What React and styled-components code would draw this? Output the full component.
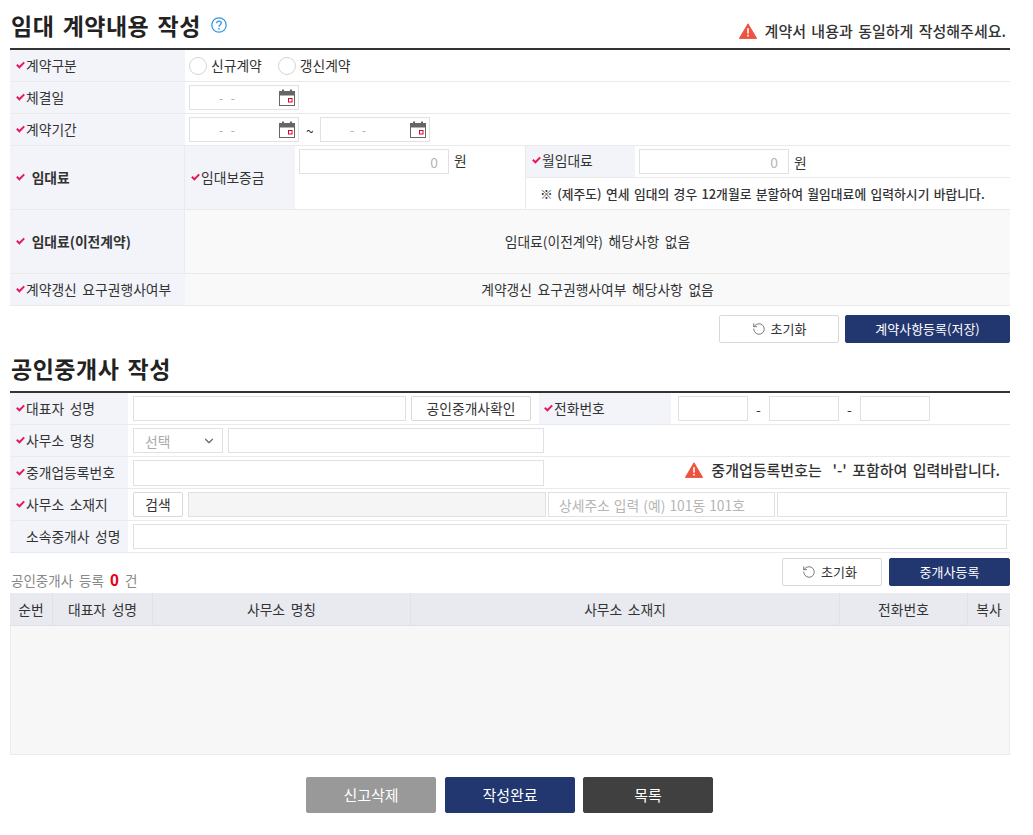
import React from "react";
import styled, { createGlobalStyle } from "styled-components";
import { RotateCcw, ChevronDown } from "lucide-react";

const GlobalStyle = createGlobalStyle`
  * { box-sizing: border-box; }
  body {
    margin: 0;
    background: #fff;
    color: #333;
    font-family: "Noto Sans CJK KR", "Noto Sans", sans-serif;
    font-size: 13.8px;
  }
`;

const Page = styled.div`
  width: 1000px;
  margin-left: 10px;
  padding-bottom: 22px;
`;

const SectionHead = styled.div`
  height: 50px;
  border-bottom: 2px solid #333;
  display: flex;
  align-items: flex-end;
  justify-content: space-between;
`;

const Title = styled.h2`
  margin: 0 0 7px 1px;
  font-size: 23px;
  line-height: 32px;
  font-weight: 700;
  color: #222;
  word-spacing: 2.6px;
  letter-spacing: 0.5px;
  display: flex;
  align-items: center;
  gap: 10px;
`;

const Notice = styled.div`
  margin: 0 ${(p) => p.$right || 4}px ${(p) => p.$bottom || 7}px 0;
  display: flex;
  align-items: center;
  gap: 8px;
  font-weight: 500;
  font-size: 15px;
  line-height: 20px;
  color: #333;
  word-spacing: 2px;
`;

const Row = styled.div`
  display: flex;
  height: ${(p) => p.$h || 32}px;
  border-bottom: 1px solid #eaeaea;
  background: ${(p) => p.$bg || "#fff"};
`;

const Th = styled.div`
  width: ${(p) => p.$w}px;
  flex: none;
  background: #f2f4f9;
  display: flex;
  align-items: center;
  gap: 1px;
  padding-left: ${(p) => p.$pl || 6}px;
  padding-bottom: ${(p) => p.$pb ?? 2}px;
  font-weight: ${(p) => (p.$bold ? 700 : 400)};
  white-space: nowrap;
  word-spacing: 2.5px;
  border-right: ${(p) => (p.$divide ? "1px solid #e8eaf0" : "0")};
`;

const Td = styled.div`
  flex: ${(p) => (p.$w ? "none" : 1)};
  width: ${(p) => (p.$w ? `${p.$w}px` : "auto")};
  display: flex;
  align-items: ${(p) => (p.$top ? "flex-start" : "center")};
  gap: ${(p) => p.$gap ?? 5}px;
  padding-left: ${(p) => p.$pl ?? 5}px;
  padding-top: ${(p) => (p.$top ? 3 : 0)}px;
  white-space: nowrap;
`;

const PlainCell = styled.div`
  flex: 1;
  display: flex;
  align-items: center;
  justify-content: center;
  padding-bottom: 2px;
  word-spacing: 2.5px;
  white-space: nowrap;
`;

const Radio = styled.label`
  display: flex;
  align-items: center;
  gap: 4px;
  margin-right: 16px;
`;

const RadioMark = styled.span`
  width: 18px;
  height: 18px;
  border: 1px solid #d5d5d5;
  border-radius: 50%;
  background: #fff;
`;

const RadioText = styled.span`
  padding-bottom: 2px;
`;

const DateBox = styled.div`
  width: 110px;
  height: 25px;
  flex: none;
  border: 1px solid #e1e1e1;
  background: #fff;
  display: flex;
  align-items: center;
  justify-content: space-between;
  padding: 0 2px 0 29px;
  color: #aaa;
  font-size: 12px;
  word-spacing: 5px;
`;

const Input = styled.input`
  width: ${(p) => p.$w}px;
  height: ${(p) => p.$h || 25}px;
  flex: none;
  border: 1px solid #e1e1e1;
  border-radius: 0;
  outline: 0;
  padding: 0 10px;
  font: inherit;
  word-spacing: 1px;
  color: #aaa;
  text-align: ${(p) => p.$align || "left"};
  background: ${(p) => (p.$disabled ? "#f5f5f5" : "#fff")};

  &::placeholder {
    color: #b5b5b5;
    opacity: 1;
  }
`;

const Won = styled.span`
  line-height: 22px;
`;

const Sep = styled.span`
  width: ${(p) => p.$w}px;
  flex: none;
`;

const RentSide = styled.div`
  flex: 1;
  display: flex;
  flex-direction: column;
  border-left: 1px solid #eaeaea;
`;

const RentTop = styled.div`
  display: flex;
  height: 32px;
  border-bottom: 1px solid #eaeaea;
`;

const RentNote = styled.div`
  flex: 1;
  display: flex;
  align-items: center;
  padding: 0 0 1px 14px;
  font-weight: 500;
  font-size: 12.8px;
  word-spacing: 1.5px;
  white-space: nowrap;
`;

const ButtonRow = styled.div`
  display: flex;
  justify-content: flex-end;
  align-items: flex-end;
  gap: ${(p) => p.$gap || 6}px;
  margin-top: ${(p) => p.$mt}px;
`;

const Btn = styled.button`
  width: ${(p) => p.$w}px;
  height: ${(p) => p.$h || 28}px;
  flex: none;
  border: 1px solid ${(p) => p.$bg || "#d8d8d8"};
  border-radius: 2px;
  background: ${(p) => p.$bg || "#fff"};
  color: ${(p) => p.$color || "#333"};
  font: inherit;
  font-size: ${(p) => p.$fs || 13}px;
  padding: 0 ${(p) => p.$pr || 0}px 1px 0;
  display: inline-flex;
  align-items: center;
  justify-content: center;
  gap: 5px;
`;

const SearchBtn = styled(Btn)`
  margin-right: 3px;
`;

const Select = styled.div`
  width: 90px;
  height: 25px;
  flex: none;
  border: 1px solid #e1e1e1;
  display: flex;
  align-items: center;
  justify-content: space-between;
  padding: 0 6px 0 11px;
  color: #aaa;
`;

const Count = styled.div`
  margin: 0 auto -4px 1px;
  color: #888;
  font-size: 13.5px;
  line-height: 18px;
  word-spacing: 3px;
`;

const CountNum = styled.b`
  color: #e60012;
  font-size: 16px;
  font-family: "Liberation Sans", sans-serif;
`;

const TableHead = styled.div`
  display: grid;
  grid-template-columns: 42px 100px 258px 429px 128px 43px;
  height: 33px;
  margin-top: 7px;
  background: #e9eaef;
  border-bottom: 1px solid #dfe1e8;
`;

const HeadCell = styled.div`
  display: flex;
  align-items: center;
  justify-content: center;
  padding-bottom: 1px;
  border-left: 1px solid #dfe1e8;
  word-spacing: 2.5px;

  &:first-child {
    border-left: 0;
  }
`;

const TableBody = styled.div`
  height: 129px;
  background: #f7f7f7;
  border: 1px solid #ececec;
  border-top: 0;
`;

const Footer = styled.div`
  display: flex;
  padding-left: 296px;
  margin-top: 22px;

  & > button:first-child {
    margin-right: 9px;
  }

  & > button:nth-child(2) {
    margin-right: 8px;
  }
`;

const CheckSvg = styled.svg`
  flex: none;
`;

const Check = () => (
  <CheckSvg width="9" height="8" viewBox="0 0 9 8">
    <path d="M0.8 3.8 L3.4 6.3 L8.2 1.4" fill="none" stroke="#e8185f" strokeWidth="2" />
  </CheckSvg>
);

const HelpIcon = () => (
  <svg width="16" height="16" viewBox="0 0 16 16">
    <circle cx="8" cy="8" r="7.2" fill="none" stroke="#2c96dc" strokeWidth="1.2" />
    <path d="M5.7 6.2 C5.8 3.4 10.3 3.5 10.3 6.1 C10.3 7.8 8 7.8 8 9.8" fill="none" stroke="#2c96dc" strokeWidth="1.3" />
    <circle cx="8" cy="11.8" r="0.9" fill="#2c96dc" />
  </svg>
);

const WarnIcon = () => (
  <svg width="18" height="16" viewBox="0 0 18 16">
    <path d="M9 0.8 L17.6 15.4 L0.4 15.4 Z" fill="#ee5340" stroke="#ee5340" strokeLinejoin="round" />
    <rect x="8.2" y="5.2" width="1.6" height="5.4" fill="#fff" />
    <rect x="8.2" y="11.8" width="1.6" height="1.7" fill="#fff" />
  </svg>
);

const CalendarIcon = () => (
  <svg width="17" height="18" viewBox="0 0 17 18">
    <rect x="0.5" y="2.5" width="15" height="14" fill="#fff" stroke="#666" />
    <rect x="0.5" y="2.5" width="15" height="4" fill="#666" />
    <rect x="3" y="0.5" width="2" height="3" fill="#666" />
    <rect x="11" y="0.5" width="2" height="3" fill="#666" />
    <rect x="9.5" y="9.5" width="3.5" height="3.5" fill="#fff" stroke="#d8002f" />
  </svg>
);

const DateInput = () => (
  <DateBox>
    <span>- -</span>
    <CalendarIcon />
  </DateBox>
);

const ResetButton = ({ w, pr }) => (
  <Btn $w={w} $pr={pr}>
    <RotateCcw size={14} strokeWidth={1.3} color="#555" />
    초기화
  </Btn>
);

function App() {
  return (
    <Page>
      <GlobalStyle />
      <SectionHead>
        <Title>
          임대 계약내용 작성
          <HelpIcon />
        </Title>
        <Notice>
          <WarnIcon />
          계약서 내용과 동일하게 작성해주세요.
        </Notice>
      </SectionHead>

      <Row>
        <Th $w={175}>
          <Check />
          계약구분
        </Th>
        <Td $pl={4} $gap={0}>
          <Radio>
            <RadioMark />
            <RadioText>신규계약</RadioText>
          </Radio>
          <Radio>
            <RadioMark />
            <RadioText>갱신계약</RadioText>
          </Radio>
        </Td>
      </Row>
      <Row>
        <Th $w={175}>
          <Check />
          체결일
        </Th>
        <Td $pl={4}>
          <DateInput />
        </Td>
      </Row>
      <Row>
        <Th $w={175}>
          <Check />
          계약기간
        </Th>
        <Td $pl={4} $gap={7}>
          <DateInput />
          <Sep $w={7}>~</Sep>
          <DateInput />
        </Td>
      </Row>
      <Row $h={64}>
        <Th $w={175} $bold $divide>
          <Check />
          &nbsp;임대료
        </Th>
        <Th $w={110}>
          <Check />
          임대보증금
        </Th>
        <Td $w={230} $top $pl={4}>
          <Input $w={150} $align="right" placeholder="0" />
          <Won>원</Won>
        </Td>
        <RentSide>
          <RentTop>
            <Th $w={109} $pb={3}>
              <Check />
              월임대료
            </Th>
            <Td $pl={4}>
              <Input $w={150} $align="right" placeholder="0" />
              <Won>원</Won>
            </Td>
          </RentTop>
          <RentNote>※ (제주도) 연세 임대의 경우 12개월로 분할하여 월임대료에 입력하시기 바랍니다.</RentNote>
        </RentSide>
      </Row>
      <Row $h={64} $bg="#f9f9fa">
        <Th $w={175} $bold $divide>
          <Check />
          &nbsp;임대료(이전계약)
        </Th>
        <PlainCell>임대료(이전계약) 해당사항 없음</PlainCell>
      </Row>
      <Row $bg="#f9f9fa">
        <Th $w={175}>
          <Check />
          계약갱신 요구권행사여부
        </Th>
        <PlainCell>계약갱신 요구권행사여부 해당사항 없음</PlainCell>
      </Row>

      <ButtonRow $mt={9}>
        <ResetButton w={120} />
        <Btn $w={165} $bg="#22376f" $color="#fff">계약사항등록(저장)</Btn>
      </ButtonRow>

      <SectionHead>
        <Title>공인중개사 작성</Title>
      </SectionHead>

      <Row>
        <Th $w={118}>
          <Check />
          대표자 성명
        </Th>
        <Td $w={411}>
          <Input $w={273} />
          <Btn $w={120} $h={25} $fs={13.8}>공인중개사확인</Btn>
        </Td>
        <Th $w={132} $pl={5}>
          <Check />
          전화번호
        </Th>
        <Td $pl={7} $gap={8}>
          <Input $w={70} />
          <Sep $w={5}>-</Sep>
          <Input $w={70} />
          <Sep $w={5}>-</Sep>
          <Input $w={70} />
        </Td>
      </Row>
      <Row>
        <Th $w={118}>
          <Check />
          사무소 명칭
        </Th>
        <Td>
          <Select>
            선택
            <ChevronDown size={14} color="#666" />
          </Select>
          <Input $w={316} />
        </Td>
      </Row>
      <Row>
        <Th $w={118}>
          <Check />
          중개업등록번호
        </Th>
        <Td>
          <Input $w={411} $h={26} />
        </Td>
        <Notice $right={10} $bottom={5}>
          <WarnIcon />
          중개업등록번호는 &nbsp;'-' 포함하여 입력바랍니다.
        </Notice>
      </Row>
      <Row>
        <Th $w={118}>
          <Check />
          사무소 소재지
        </Th>
        <Td $gap={2}>
          <SearchBtn $w={50} $h={25} $fs={13.8}>검색</SearchBtn>
          <Input $w={358} $disabled />
          <Input $w={227} placeholder="상세주소 입력 (예) 101동 101호" />
          <Input $w={230} />
        </Td>
      </Row>
      <Row>
        <Th $w={118} $pl={16}>소속중개사 성명</Th>
        <Td>
          <Input $w={874} />
        </Td>
      </Row>

      <ButtonRow $mt={5} $gap={7}>
        <Count>
          공인중개사 등록 <CountNum>0</CountNum> 건
        </Count>
        <ResetButton w={100} pr={5} />
        <Btn $w={121} $bg="#22376f" $color="#fff">중개사등록</Btn>
      </ButtonRow>

      <TableHead>
        <HeadCell>순번</HeadCell>
        <HeadCell>대표자 성명</HeadCell>
        <HeadCell>사무소 명칭</HeadCell>
        <HeadCell>사무소 소재지</HeadCell>
        <HeadCell>전화번호</HeadCell>
        <HeadCell>복사</HeadCell>
      </TableHead>
      <TableBody />

      <Footer>
        <Btn $w={130} $h={36} $fs={15} $bg="#999" $color="#fff">신고삭제</Btn>
        <Btn $w={130} $h={36} $fs={15} $bg="#22376f" $color="#fff">작성완료</Btn>
        <Btn $w={130} $h={36} $fs={15} $bg="#404040" $color="#fff">목록</Btn>
      </Footer>
    </Page>
  );
}

export default App;
